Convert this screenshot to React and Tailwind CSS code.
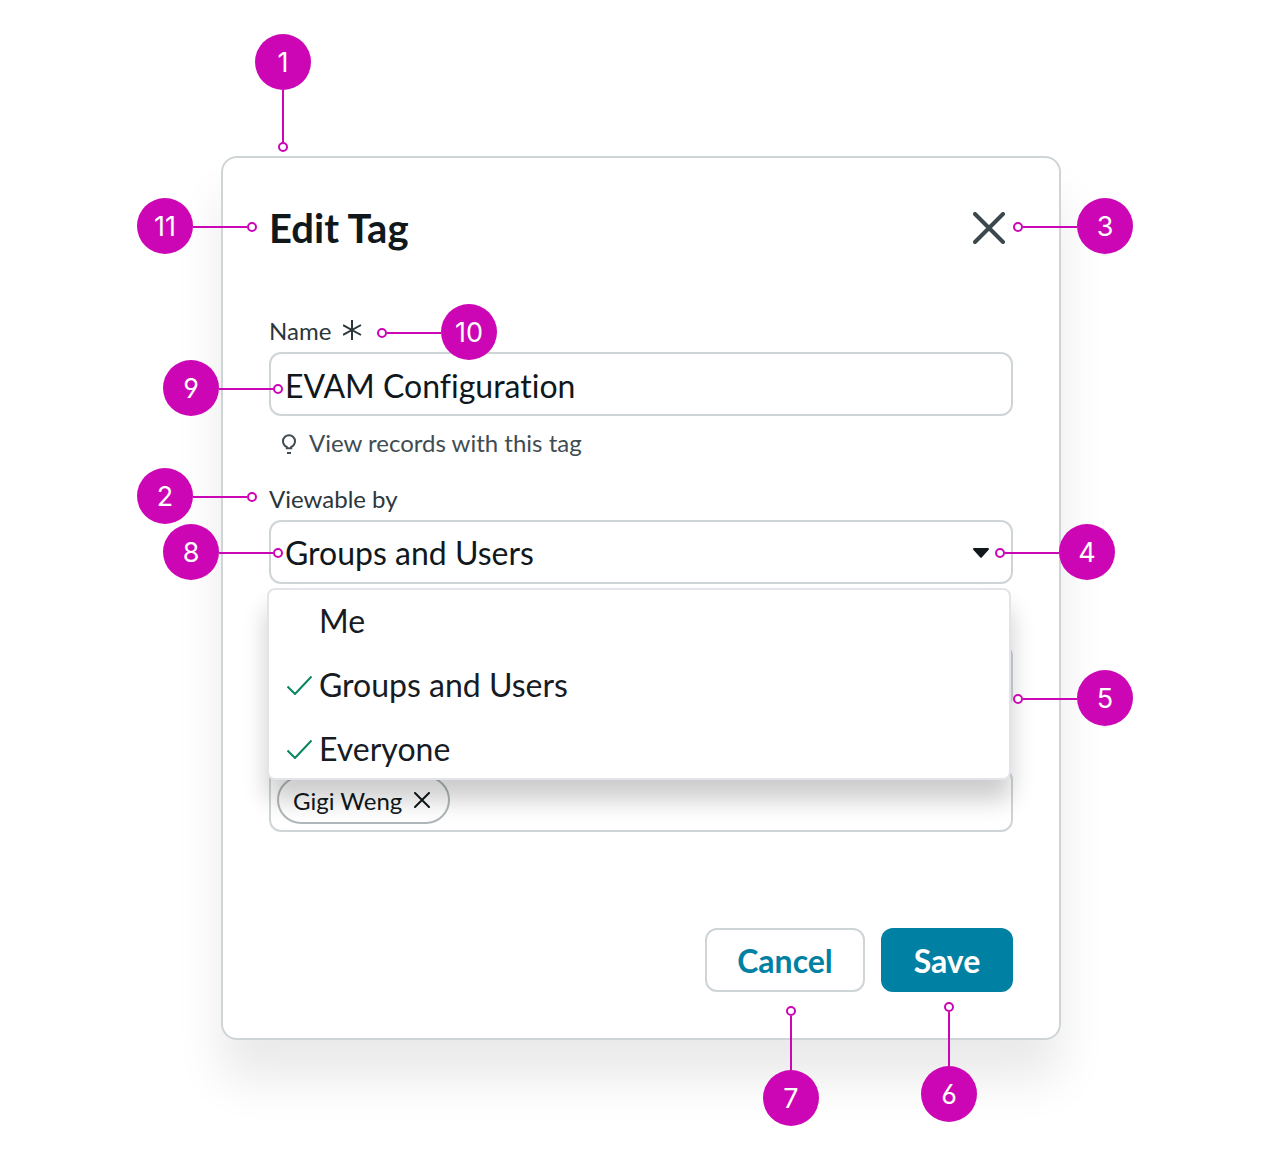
import { useState } from 'react';
import clsx from 'clsx';

const VIEW_OPTIONS = ['Me', 'Groups and Users', 'Everyone'];

// `side` is the side of the marked element on which the badge sits
const PINS = [
  { id: 1, side: 'top', place: 'left-[34px] -top-[122px]' },
  { id: 11, side: 'left', place: '-left-[84px] top-[42px]' },
  { id: 3, side: 'right', place: '-right-[72px] top-[42px]' },
  { id: 10, side: 'right', place: 'left-[156px] top-[148px]' },
  { id: 9, side: 'left', place: '-left-[58px] top-[204px]' },
  { id: 2, side: 'left', place: '-left-[84px] top-[312px]' },
  { id: 8, side: 'left', place: '-left-[58px] top-[368px]' },
  { id: 4, side: 'right', place: '-right-[54px] top-[368px]' },
  { id: 5, side: 'right', place: '-right-[72px] top-[514px]' },
  { id: 7, side: 'bottom', place: 'right-[242px] -bottom-[86px]' },
  { id: 6, side: 'bottom', place: 'right-[84px] -bottom-[82px]' },
];

const PIN_DIRECTION = {
  top: 'flex-col',
  bottom: 'flex-col-reverse',
  left: 'flex-row',
  right: 'flex-row-reverse',
};

const Pin = ({ id, side, place }) => {
  const vertical = side === 'top' || side === 'bottom';

  return (
    <div className={clsx('pointer-events-none absolute z-20 flex items-center', PIN_DIRECTION[side], place)}>
      <span className="flex size-14 items-center justify-center rounded-full bg-[#cc06b4] pt-0.5 font-['Inter',sans-serif] text-[27px] leading-8 font-normal text-white [font-feature-settings:'cv03','cv04']">
        {id}
      </span>
      <span className={clsx('flex items-center', PIN_DIRECTION[side], !vertical && 'pt-0.5')}>
        <span
          className={clsx(
            'bg-[#cc06b4]',
            side === 'top' && 'h-[52px] w-0.5',
            side === 'bottom' && 'h-[54px] w-0.5',
            !vertical && 'h-0.5 w-[54px]'
          )}
        />
        <span className="size-2.5 rounded-full border-2 border-[#cc06b4] bg-white" />
      </span>
    </div>
  );
};

const CrossIcon = ({ className, strokeWidth }) => (
  <svg viewBox="0 0 32 32" className={className} fill="none" stroke="currentColor" strokeWidth={strokeWidth} strokeLinecap="round">
    <path d="M2 2l28 28M30 2L2 30" />
  </svg>
);

const RequiredIcon = () => (
  <svg viewBox="0 0 20 20" className="size-5" fill="none" stroke="currentColor" strokeWidth="2">
    <path d="M9 0v20M0 5l18 10M18 5L0 15" />
  </svg>
);

const BulbIcon = () => (
  <svg viewBox="0 0 16 20" className="h-5 w-4" fill="none" stroke="currentColor" strokeWidth="2">
    <path d="M5.800 14.200v-1.200C3.400 11.700 2 9.600 2 7.200a6 6 0 0 1 12 0c0 2.400-1.400 4.500-3.800 5.800v1.200z" />
    <path d="M6 19h4" />
  </svg>
);

const CheckIcon = () => (
  <svg viewBox="0 0 26 20" className="h-5 w-[26px] text-[#0a8560]" fill="none" stroke="currentColor" strokeWidth="2">
    <path d="M.5 11.500l7.500 7.500L24.500 1.500" />
  </svg>
);

const App = () => {
  const [name, setName] = useState('EVAM Configuration');
  const [viewableBy, setViewableBy] = useState('Groups and Users');
  const [checked, setChecked] = useState(['Groups and Users', 'Everyone']);

  const toggleOption = (option) => {
    setChecked((prev) => (prev.includes(option) ? prev.filter((o) => o !== option) : [...prev, option]));
  };

  return (
    <div className="flex min-h-screen items-start justify-center bg-white pt-39 pb-30 pl-3 font-['Lato',sans-serif] text-[#10181b] [font-variant-ligatures:none]">
      <div className="relative w-full max-w-[840px]">
        <form
          className="rounded-2xl border-2 border-[#cfd5d7] bg-white p-[46px] shadow-[0_40px_48px_rgba(0,0,0,0.085)]"
          onSubmit={(e) => e.preventDefault()}
        >
          <div className="flex h-12 items-center justify-between">
            <h1 className="text-[40px] leading-12 font-bold">Edit Tag</h1>
            <button type="button" aria-label="Close" className="flex size-12 items-center justify-center text-[#3b484e]">
              <CrossIcon className="size-8" strokeWidth="4" />
            </button>
          </div>

          <label htmlFor="tag-name" className="mt-16 flex items-start gap-3 text-2xl leading-[30px] text-[#2b363b]">
            Name
            <span className="pt-1">
              <RequiredIcon />
            </span>
          </label>
          <input
            id="tag-name"
            type="text"
            value={name}
            onChange={(e) => setName(e.target.value)}
            className="mt-1.5 block h-16 w-full rounded-xl border-2 border-[#cfd5d7] px-3.5 pt-0.5 text-[32px]"
          />
          <p className="mt-3 flex items-center gap-3 pl-3 text-2xl leading-[30px] text-[#3f4c52]">
            <span className="pt-0.5">
              <BulbIcon />
            </span>
            View records with this tag
          </p>

          <label htmlFor="viewable-by" className="mt-[26px] block text-2xl leading-[30px] text-[#2b363b]">
            Viewable by
          </label>
          <div className="relative mt-1.5">
            <select
              id="viewable-by"
              value={viewableBy}
              onChange={(e) => setViewableBy(e.target.value)}
              className="block h-16 w-full appearance-none rounded-xl border-2 border-[#cfd5d7] bg-white px-3.5 pt-0.5 text-[32px]"
            >
              {VIEW_OPTIONS.map((option) => (
                <option key={option}>{option}</option>
              ))}
            </select>
            <svg viewBox="0 0 16 10" className="pointer-events-none absolute top-7 right-6 h-2.5 w-4" fill="currentColor">
              <path d="M1 0h14a1 1 0 0 1 .7 1.700L8.700 9.600a1 1 0 0 1-1.400 0L.3 1.700A1 1 0 0 1 1 0z" />
            </svg>

            {/* Open menu */}
            <ul className="absolute top-17 right-0.5 -left-0.5 z-10 h-48 overflow-hidden rounded-lg border-2 border-[#e3e4e9] bg-white text-[#161b24] shadow-[0_20px_24px_rgba(0,0,0,0.2)]">
              {VIEW_OPTIONS.map((option) => (
                <li key={option}>
                  <button
                    type="button"
                    onClick={() => toggleOption(option)}
                    className="flex h-16 w-full items-center gap-1.5 pb-0.5 pl-4.5 text-left text-[32px]"
                  >
                    <span className="w-[26px]">{checked.includes(option) && <CheckIcon />}</span>
                    {option}
                  </button>
                </li>
              ))}
            </ul>
          </div>

          {/* Pill fields, partly under the menu */}
          <div className="mt-15 h-16 rounded-xl border-2 border-[#cfd5d7]" />
          <div className="mt-15 flex h-16 items-center rounded-xl border-2 border-[#cfd5d7] px-1.5">
            <span className="flex h-12 items-center gap-3 rounded-full border-2 border-[#b0b7ba] pr-4.5 pl-3.5 text-2xl leading-8">
              <span className="pt-0.5">Gigi Weng</span>
              <button type="button" aria-label="Remove Gigi Weng">
                <CrossIcon className="size-4" strokeWidth="4" />
              </button>
            </span>
          </div>

          <div className="mt-24 flex justify-end gap-4 text-[32px] font-bold">
            <button type="button" className="h-16 min-w-40 rounded-xl border-2 border-[#cfd5d7] px-7 pt-0.5 text-[#0080a3]">
              Cancel
            </button>
            <button type="submit" className="h-16 min-w-33 rounded-xl bg-[#0080a3] px-7 pt-0.5 text-white">
              Save
            </button>
          </div>
        </form>

        {PINS.map((pin) => (
          <Pin key={pin.id} {...pin} />
        ))}
      </div>
    </div>
  );
};

export default App;
